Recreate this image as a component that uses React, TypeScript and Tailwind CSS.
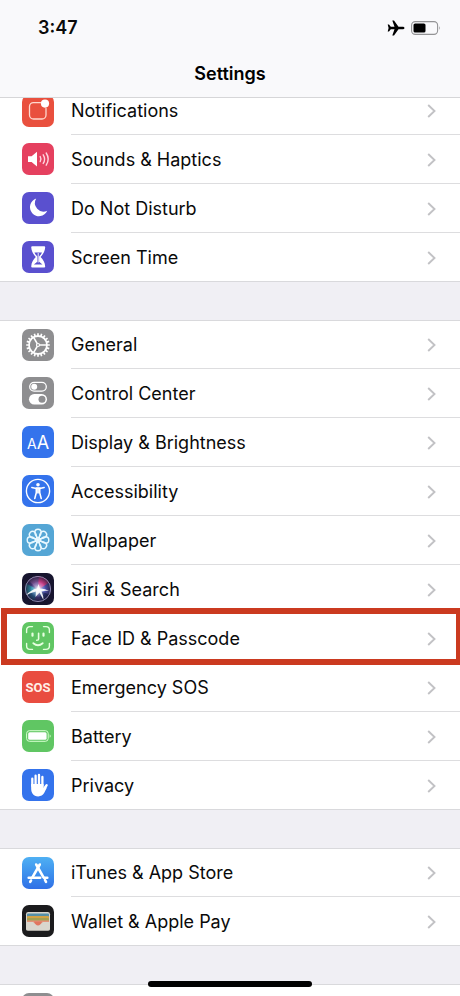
import type { ReactNode } from "react";

type Item = {
  label: string;
  color: string;
  icon: ReactNode;
  highlighted?: boolean;
};

const range = (n: number) => Array.from({ length: n }, (_, i) => i);

const Glyph = ({ children }: { children: ReactNode }) => (
  <svg viewBox="0 0 32 32" className="size-8" fill="none" aria-hidden="true">
    {children}
  </svg>
);

const NotificationsIcon = () => (
  <Glyph>
    <path
      d="M18.6 7.6H11.5a4 4 0 0 0-4 4V20a4 4 0 0 0 4 4H20a4 4 0 0 0 4-4v-6.6"
      stroke="#ffd9cf"
      strokeWidth="1.3"
      strokeLinecap="round"
    />
    <circle cx="23" cy="8.6" r="4.1" fill="#fff" />
  </Glyph>
);

const SoundsIcon = () => (
  <Glyph>
    <path d="M6 13.2h3.6l5.4-4.4v14.6l-5.4-4.5H6z" fill="#fff" />
    <g stroke="#ffd5de" strokeWidth="1.4" strokeLinecap="round">
      <path d="M18.2 13.6q1.6 2.5 0 5" />
      <path d="M21.2 11.8q2.8 4.3 0 8.6" />
      <path d="M24.2 10q4 6.1 0 12.2" />
    </g>
  </Glyph>
);

const MoonIcon = () => (
  <Glyph>
    <path
      d="M14.2 6.6A9 9 0 1 0 25.2 18.8 8.6 8.6 0 0 1 14.2 6.6z"
      fill="#fff"
    />
  </Glyph>
);

const HourglassIcon = () => (
  <Glyph>
    <path
      d="M10.2 5.2h12a1 1 0 0 1 1 1c-.3 4-2 7-4.6 9.8 2.600 2.600 4.300 5.400 4.600 9.400a1 1 0 0 1-1 1h-12a1 1 0 0 1-1-1c.3-4 2-6.8 4.600-9.400-2.600-2.800-4.300-5.800-4.600-9.800a1 1 0 0 1 1-1z"
      fill="#fff"
    />
    <path
      d="M12.400 11.400h7.600c-.7 1.600-1.700 2.900-2.900 4v5.400l3.400 2.600h-8.600l3.400-2.600v-5.400c-1.200-1.100-2.200-2.400-2.900-4z"
      fill="#5a50cf"
    />
    <path d="M16.2 12v9.500" stroke="#fff" strokeWidth=".9" />
  </Glyph>
);

const GearIcon = () => (
  <Glyph>
    <g stroke="#fff">
      {range(20).map((i) => (
        <path
          key={i}
          d="M16 6.800V4.200"
          strokeWidth="1.7"
          transform={`rotate(${i * 18} 16 16)`}
        />
      ))}
      <circle cx="16" cy="16" r="9" strokeWidth="1.8" />
      {[60, 180, 300].map((deg) => (
        <path
          key={deg}
          d="M16 14.500V7.500"
          strokeWidth="1.6"
          transform={`rotate(${deg + 30} 16 16)`}
        />
      ))}
      <circle cx="16" cy="16" r="1.5" strokeWidth="1.2" />
    </g>
  </Glyph>
);

const TogglesIcon = () => (
  <Glyph>
    <rect x="7.7" y="5.4" width="16.6" height="8.8" rx="4.4" stroke="#fff" strokeWidth="1.3" />
    <circle cx="12.200" cy="9.8" r="3" fill="#fff" />
    <rect x="7" y="17" width="18" height="10.400" rx="5.2" fill="#fff" />
    <circle cx="20" cy="22.200" r="3.500" fill="#8e8e90" />
  </Glyph>
);

const DisplayIcon = () => (
  <span
    aria-hidden="true"
    className="flex items-baseline pt-0.5 text-sm leading-none text-white"
  >
    A<span className="text-lg leading-none">A</span>
  </span>
);

const AccessibilityIcon = () => (
  <Glyph>
    <circle cx="16" cy="16" r="11.6" stroke="#fff" strokeWidth="1.4" />
    <circle cx="16" cy="9.7" r="1.8" fill="#fff" />
    <path
      d="M9.800 12.500l4.500.9h3.400l4.500-.9"
      stroke="#fff"
      strokeWidth="1.5"
      strokeLinecap="round"
    />
    <path
      d="M14.300 13h3.400v4.600l1.500 5.800M14.300 13v4.600l-1.500 5.800M16 13v5"
      stroke="#fff"
      strokeWidth="1.6"
      strokeLinecap="round"
    />
  </Glyph>
);

const WallpaperIcon = () => (
  <Glyph>
    <g stroke="#e8f8ff">
      {range(8).map((i) => (
        <path
          key={i}
          d="M16 14.500C14.500 12.500 12.800 11 12.800 8.400a3.200 3.200 0 0 1 6.400 0C19.200 11 17.500 12.500 16 14.500z"
          strokeWidth="1.4"
          transform={`rotate(${i * 45} 16 16)`}
        />
      ))}
    </g>
    <circle cx="16" cy="16" r="1.500" fill="#e8f8ff" />
  </Glyph>
);

const SiriIcon = () => (
  <Glyph>
    <defs>
      <radialGradient id="siri-core" cx="50%" cy="50%" r="50%">
        <stop offset="0" stopColor="#fff" />
        <stop offset=".4" stopColor="#e3f1ff" stopOpacity=".6" />
        <stop offset="1" stopColor="#88aadd" stopOpacity="0" />
      </radialGradient>
      <radialGradient id="siri-edge" cx="50%" cy="50%" r="50%">
        <stop offset=".5" stopColor="#17152e" stopOpacity="0" />
        <stop offset="1" stopColor="#17152e" stopOpacity=".75" />
      </radialGradient>
      <clipPath id="siri-clip">
        <circle cx="16" cy="16" r="12.6" />
      </clipPath>
    </defs>
    <g clipPath="url(#siri-clip)">
      <path d="M0 0h32v32H0z" fill="#44397a" />
      <path d="M16 17L13 0h16l2 9z" fill="#d8418c" />
      <path d="M16 17L3 4 13 0h4z" fill="#7e5596" />
      <path d="M16 17L31 7v17z" fill="#5456b4" />
      <path d="M16 17L0 8v16z" fill="#2c8fa6" />
      <path d="M16 17L0 23v9h11z" fill="#275a86" />
      <path d="M16 17l4 15h9l2-9z" fill="#27306e" />
      <circle cx="16" cy="16" r="12.6" fill="url(#siri-edge)" />
      <circle cx="16" cy="16.500" r="8" fill="url(#siri-core)" />
      <path
        d="M3 23Q9 16.500 15 15.500L16.500 11l1.500 4.500q5-.2 9 2.500-4-.6-7.500.4 2 4 2 8.600-2-3.500-4-7.500L13.500 24l.5-5.500Q8 19.500 3 23z"
        fill="#fff"
        opacity=".9"
      />
    </g>
    <circle cx="16" cy="16" r="12.6" stroke="#9d95b8" strokeWidth=".8" />
  </Glyph>
);

const FaceIdIcon = () => (
  <Glyph>
    <g stroke="#e6ffdf" strokeWidth="1.4" strokeLinecap="round">
      <path d="M4.600 10.500V8a3.400 3.400 0 0 1 3.400-3.400h2.500M21.500 4.600H24A3.400 3.400 0 0 1 27.400 8v2.500M27.400 21.500V24a3.400 3.400 0 0 1-3.400 3.400h-2.500M10.500 27.400H8A3.400 3.400 0 0 1 4.600 24v-2.500" />
      <path d="M10.500 11.500v2.200M21.500 11.500v2.200" strokeWidth="2.2" />
      <path d="M16.600 11.200v5.800q0 1.300-1.900 1.300" strokeWidth="1.6" />
      <path d="M11.300 21.200q4.700 4 9.400 0" strokeWidth="1.8" />
    </g>
  </Glyph>
);

const SosIcon = () => (
  <span
    aria-hidden="true"
    className="font-['Roboto',sans-serif] text-[13px] leading-none font-bold text-[#fff0e8]"
  >
    SOS
  </span>
);

const BatteryIcon = () => (
  <Glyph>
    <rect x="4.6" y="10.7" width="21.6" height="10.6" rx="2.8" stroke="#d8ffd0" strokeWidth="1" />
    <rect x="6.2" y="12.3" width="18.4" height="7.4" rx="1.5" fill="#fff" />
    <path d="M27.700 14.200q2 1.800 0 3.600z" fill="#d8ffd0" />
  </Glyph>
);

const HandIcon = () => (
  <Glyph>
    <g stroke="#fff" strokeLinecap="round">
      <path d="M10.300 17V9.700M13.600 16V6.700M17 16V5.900M20.400 17V8" strokeWidth="2.3" />
      <path d="M20.800 21.500l3.800-5.200" strokeWidth="2.4" />
    </g>
    <path
      d="M9.150 15h12.400v4.500l1.700-2.300 1.600 1.600c-1.800 3-2.900 8.600-8.600 8.600-5 0-7.100-3.600-7.100-8.200z"
      fill="#fff"
    />
  </Glyph>
);

const AppStoreIcon = () => (
  <Glyph>
    <g stroke="#fff" strokeWidth="2.6" strokeLinecap="round">
      <path d="M14.200 7.500l7.300 12.800M23 23l1 1.900" />
      <path d="M17.800 7.500L10.400 20.300" />
      <path d="M6.700 20.700h11.500M22.200 20.700h3.100" />
      <path d="M9 23.500l-.8 1.400" />
    </g>
  </Glyph>
);

const WalletIcon = () => (
  <Glyph>
    <rect x="4" y="7" width="24" height="18.6" rx="2.2" fill="#d9d6cd" />
    <rect x="5" y="8.6" width="22" height="4" rx="1" fill="#5590a8" />
    <rect x="5" y="11" width="22" height="4" rx="1" fill="#d3a344" />
    <rect x="5" y="13" width="22" height="4" rx="1" fill="#a3a052" />
    <path d="M5 15.500h22V19H5z" fill="#e3937a" />
    <path
      d="M4 17h6.500c1.500 0 1.800 1 2.700 2q2.800 2.400 5.600 0c.9-1 1.200-2 2.700-2H28v6.400a2.200 2.200 0 0 1-2.200 2.200H6.200A2.200 2.200 0 0 1 4 23.400z"
      fill="#d9d6cd"
    />
    <path d="M12 16.500h8q-1.500 4-4 4t-4-4z" fill="#e07660" />
  </Glyph>
);

const groups: Item[][] = [
  [
    { label: "Notifications", color: "bg-[#e9503e]", icon: <NotificationsIcon /> },
    { label: "Sounds & Haptics", color: "bg-[#e5405f]", icon: <SoundsIcon /> },
    { label: "Do Not Disturb", color: "bg-[#5a50cf]", icon: <MoonIcon /> },
    { label: "Screen Time", color: "bg-[#5a50cf]", icon: <HourglassIcon /> },
  ],
  [
    { label: "General", color: "bg-[#8e8e90]", icon: <GearIcon /> },
    { label: "Control Center", color: "bg-[#8e8e90]", icon: <TogglesIcon /> },
    { label: "Display & Brightness", color: "bg-[#3473ec]", icon: <DisplayIcon /> },
    { label: "Accessibility", color: "bg-[#3473ec]", icon: <AccessibilityIcon /> },
    { label: "Wallpaper", color: "bg-[#55a6d5]", icon: <WallpaperIcon /> },
    { label: "Siri & Search", color: "bg-[#17152e]", icon: <SiriIcon /> },
    {
      label: "Face ID & Passcode",
      color: "bg-[#60c663]",
      icon: <FaceIdIcon />,
      highlighted: true,
    },
    { label: "Emergency SOS", color: "bg-[#e94d40]", icon: <SosIcon /> },
    { label: "Battery", color: "bg-[#60c663]", icon: <BatteryIcon /> },
    { label: "Privacy", color: "bg-[#3473ec]", icon: <HandIcon /> },
  ],
  [
    {
      label: "iTunes & App Store",
      color: "bg-linear-to-b from-[#4fb0f3] to-[#3170e6]",
      icon: <AppStoreIcon />,
    },
    { label: "Wallet & Apple Pay", color: "bg-[#1b1b1d]", icon: <WalletIcon /> },
  ],
];

const Chevron = () => (
  <svg viewBox="0 0 9 14" className="h-3.5 w-[9px]" fill="none" aria-hidden="true">
    <path d="M1.200 1l6.300 6-6.300 6" stroke="#c2c2c5" strokeWidth="1.9" />
  </svg>
);

const Row = ({ item }: { item: Item }) => (
  <li className="group relative h-[49px] first:h-12">
    <a href="#" className="flex h-full items-center pl-[22px]">
      <span
        className={`mb-px flex size-8 shrink-0 items-center justify-center overflow-hidden rounded-[7px] ${item.color}`}
      >
        {item.icon}
      </span>
      <span className="ml-[17px] flex h-full flex-1 items-center justify-between border-b border-[#dddddf] pt-px pr-6 group-last:border-transparent">
        {item.label}
        <Chevron />
      </span>
    </a>
    {/* Callout frame around the selected row */}
    {item.highlighted && (
      <div className="pointer-events-none absolute -top-1.5 right-0 -bottom-0.5 left-px z-10 border-6 border-r-4 border-[#cb3a20]" />
    )}
  </li>
);

const StatusBar = () => (
  <div className="flex h-[55px] items-center justify-between pr-[19px] pl-[38px]">
    <time className="text-lg font-semibold">3:47</time>
    <div className="flex items-center gap-1.5">
      <svg viewBox="0 0 18 16" className="h-4 w-[18px]" role="img" aria-label="Airplane mode">
        <path
          d="M17.500 8c0-.8-1-1.300-2.200-1.300h-3.800L7 .6H5.300l2.200 6.100H3.800L2 4.500H.7L1.600 8l-.9 3.500H2l1.800-2.200h3.700l-2.200 6.100H7l4.500-6.100h3.800c1.200 0 2.200-.5 2.200-1.300z"
          fill="#000"
        />
      </svg>
      <svg viewBox="0 0 30 14" className="h-3.5 w-[30px]" role="img" aria-label="Battery half full" fill="none">
        <rect x=".6" y=".6" width="26" height="12.8" rx="3.6" stroke="#939395" strokeWidth="1.1" />
        <rect x="2.500" y="2.500" width="12" height="9" rx="1.6" fill="#000" />
        <path d="M28 4.900q1.700 2.100 0 4.200z" fill="#939395" />
      </svg>
    </div>
  </div>
);

export default function App() {
  return (
    <div className="relative h-screen overflow-hidden bg-[#f0eff4] font-['Inter','Liberation_Sans',sans-serif] text-lg text-[#0a0a0a]">
      <header className="relative z-20 border-b border-[#d6d6d8] bg-[#f9f9fb] pb-1">
        <StatusBar />
        <h1 className="flex h-[38px] items-center justify-center font-semibold text-black">
          Settings
        </h1>
      </header>

      {/* The list is scrolled part way under the header */}
      <main className="-mt-3 flex flex-col gap-[38px]">
        {groups.map((items) => (
          <ul key={items[0].label} className="relative border-t border-[#d9d9dc] bg-white shadow-[inset_0_-1px_0_#d9d9dc]">
            {items.map((item) => (
              <Row key={item.label} item={item} />
            ))}
          </ul>
        ))}
        <div className="h-12 border-t border-[#d9d9dc] bg-white pt-2 pl-[22px]">
          <div className="size-8 rounded-[7px] bg-[#8e8e90]" />
        </div>
      </main>

      <div className="absolute inset-x-0 bottom-[9px] z-20 mx-auto h-1.5 w-41 rounded-full bg-black" />
    </div>
  );
}
